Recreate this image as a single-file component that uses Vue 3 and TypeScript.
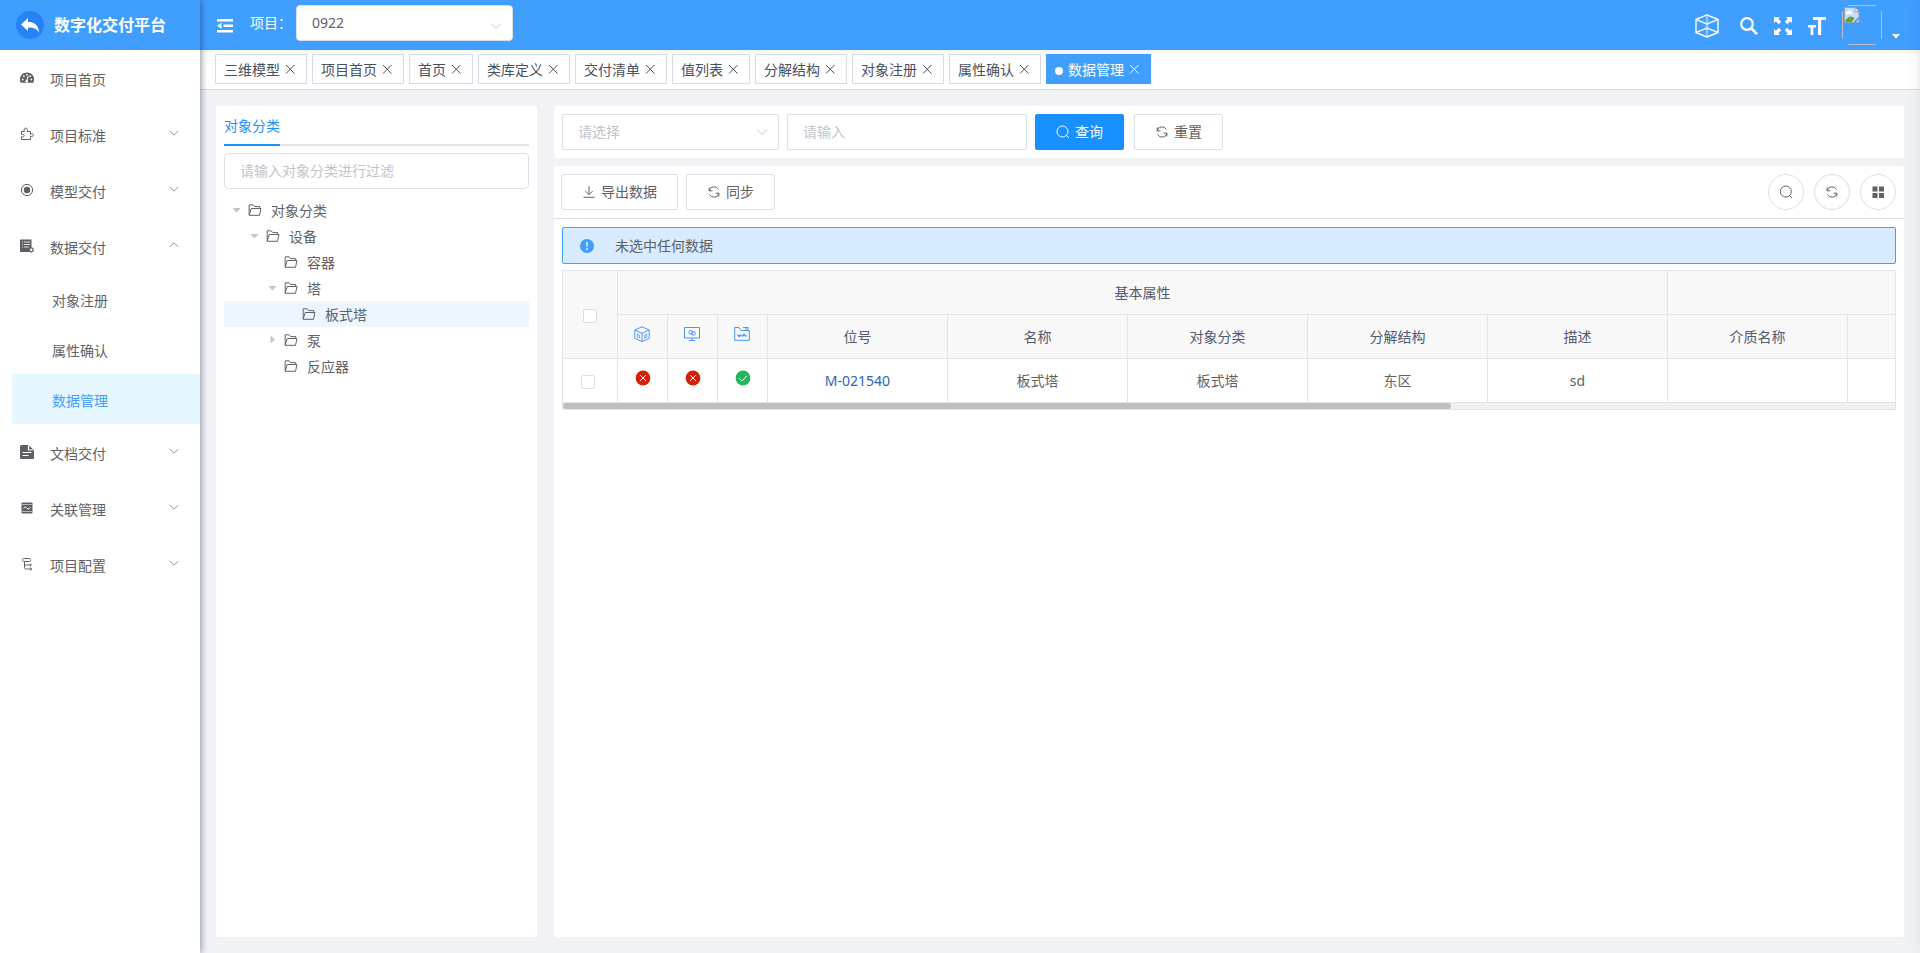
<script setup lang="ts">
import { ref } from 'vue'

interface SubItem { label: string; active?: boolean }
interface MenuItem { label: string; icon: string; arrow?: 'up' | 'down'; children?: SubItem[] }
interface TreeNode { label: string; level: number; caret?: 'open' | 'closed'; active?: boolean }

const menu: MenuItem[] = [
  { label: '项目首页', icon: 'gauge' },
  { label: '项目标准', icon: 'puzzle', arrow: 'down' },
  { label: '模型交付', icon: 'target', arrow: 'down' },
  {
    label: '数据交付', icon: 'server', arrow: 'up',
    children: [{ label: '对象注册' }, { label: '属性确认' }, { label: '数据管理', active: true }]
  },
  { label: '文档交付', icon: 'doc', arrow: 'down' },
  { label: '关联管理', icon: 'pulse', arrow: 'down' },
  { label: '项目配置', icon: 'branch', arrow: 'down' }
]

const tabs = ['三维模型', '项目首页', '首页', '类库定义', '交付清单', '值列表', '分解结构', '对象注册', '属性确认', '数据管理']
const activeTab = ref('数据管理')

const tree: TreeNode[] = [
  { label: '对象分类', level: 0, caret: 'open' },
  { label: '设备', level: 1, caret: 'open' },
  { label: '容器', level: 2 },
  { label: '塔', level: 2, caret: 'open' },
  { label: '板式塔', level: 3, active: true },
  { label: '泵', level: 2, caret: 'closed' },
  { label: '反应器', level: 2 }
]

const columns = ['位号', '名称', '对象分类', '分解结构', '描述', '介质名称', '']
const statuses = [false, false, true]
const row = ['板式塔', '板式塔', '东区', 'sd', '', '']
const keyword = ref('')
const treeFilter = ref('')
</script>

<template>
  <div class="app">
    <aside class="sidebar">
      <div class="brand">
        <svg class="brand-logo" viewBox="0 0 28 28" aria-hidden="true">
          <circle cx="14" cy="14" r="14" fill="#2682f5" />
          <path d="M5 13.500 12 7v4c6 0 10.500 2.500 11 10.500-2.500-4-5.500-5-11-5V20z" fill="#fff" />
        </svg>
        <h1 class="brand-name">数字化交付平台</h1>
      </div>
      <nav class="menu">
        <template v-for="item in menu" :key="item.label">
          <a class="menu-item" href="#">
            <svg class="menu-icon" viewBox="0 0 14 14" aria-hidden="true">
              <g v-if="item.icon === 'gauge'">
                <path d="M7 1.500a7 7 0 0 0-6.300 10.200h12.600A7 7 0 0 0 7 1.500z" fill="#5c5f66" />
                <path d="M6.500 10.500 8.300 5" stroke="#fff" stroke-width="1.100" />
                <g fill="#fff"><circle cx="2.700" cy="8.500" r=".9" /><circle cx="3.900" cy="5.200" r=".9" /><circle cx="7" cy="3.600" r=".9" /><circle cx="10.300" cy="5.200" r=".9" /><circle cx="11.400" cy="8.500" r=".9" /><circle cx="6.700" cy="10.300" r="1.300" /></g>
              </g>
              <path v-else-if="item.icon === 'puzzle'" d="M1.500 4.500h2.800C3.700 2.500 4.500 1 5.700 1S7.700 2.500 7.100 4.500h3.400v2.600c1.600-.8 2.900-.2 2.900 1s-1.300 1.700-2.900 1v3.400h-9V9.800c2 .5 2.600-.2 2.600-1.200s-.9-1.500-2.600-1z" fill="none" stroke="#606266" />
              <g v-else-if="item.icon === 'target'">
                <circle cx="7" cy="7" r="5.600" fill="none" stroke="#606266" />
                <circle cx="7" cy="7" r="3.200" fill="#5c5f66" />
              </g>
              <g v-else-if="item.icon === 'server'">
                <path d="M1 .5h10.500v8L9 13H1a1 1 0 0 1-1-1V1.500a1 1 0 0 1 1-1z" fill="#5c5f66" />
                <path d="M2 3h1M4 3h6M2 5.500h1M4 5.500h6M2 8h1M4 8h5" stroke="#fff" stroke-width=".8" />
                <circle cx="11.200" cy="10.800" r="2" fill="#fff" stroke="#5c5f66" stroke-width="1.200" />
              </g>
              <g v-else-if="item.icon === 'doc'">
                <path d="M1.500 0H8l6 5v7.500a1.500 1.500 0 0 1-1.500 1.500h-11A1.500 1.500 0 0 1 0 12.500v-11A1.500 1.500 0 0 1 1.500 0z" fill="#5c5f66" />
                <path d="M8.500.8V5h4.700M2.500 7.500h9M2.500 10.500h6" fill="none" stroke="#fff" stroke-width="1.200" />
              </g>
              <g v-else-if="item.icon === 'pulse'">
                <rect x="1.500" y="1.500" width="11" height="11" rx="1" fill="#5c5f66" />
                <path d="M1.500 3.500h11M1.500 10.500h11" stroke="#c9cbce" stroke-width=".8" />
                <path d="M3.500 7.500 5.500 5.800 8 8.300 10.500 6.500" fill="none" stroke="#fff" />
              </g>
              <g v-else fill="none" stroke="#606266">
                <rect x="2.500" y="1.500" width="8" height="3" rx="1" />
                <path d="M4.500 4.500v6a1.500 1.500 0 0 0 1.500 1.500h5.500M4.500 8H11M10 6.500 11.500 8 10 9.300M10 10.500 11.800 12 10 13.300" />
              </g>
            </svg>
            <span class="menu-label">{{ item.label }}</span>
            <svg v-if="item.arrow" class="menu-arrow" :class="item.arrow" viewBox="0 0 12 12" aria-hidden="true">
              <path d="M1.800 4 6 8.200 10.200 4" />
            </svg>
          </a>
          <a v-for="sub in item.children" :key="sub.label" class="sub-item" :class="{ active: sub.active }" href="#">
            <span class="menu-label">{{ sub.label }}</span>
          </a>
        </template>
      </nav>
    </aside>

    <div class="main">
      <header class="topbar">
        <button class="icon-btn fold" aria-label="折叠菜单">
          <svg viewBox="0 0 16 14" width="16" height="14" fill="#fff"><path d="M0 0h16v2.500H0zM6.500 5.500H16V8H6.500zM0 11h16v2.500H0zM0 6.800 4.500 3.800v6z" /></svg>
        </button>
        <label class="project-label" for="project">项目：</label>
        <span class="select-wrap project">
          <select id="project" class="field"><option>0922</option></select>
          <svg class="select-arrow" viewBox="0 0 14 14" aria-hidden="true"><path d="M2 4.500 7 9.500 12 4.500" /></svg>
        </span>
        <div class="tools">
          <button class="icon-btn" aria-label="三维模型">
            <svg viewBox="0 0 24 24" width="24" height="24" fill="none" stroke="#fff" stroke-linejoin="round">
              <path d="M12 .8 23 5.500v13L12 23 1 18.500v-13z" stroke-width="1.400" />
              <path d="M1 5.500 12 10l11-4.500M1 18.500 12 14l11 4.500" stroke-opacity=".85" stroke-width="1.400" />
              <path d="M12 1v22" stroke-opacity=".4" stroke-width="2.500" />
            </svg>
          </button>
          <button class="icon-btn" aria-label="搜索">
            <svg viewBox="0 0 18 18" width="18" height="18" fill="none" stroke="#fff"><circle cx="7" cy="7" r="5.800" stroke-width="2.200" /><path d="M11.300 11.300 17 17" stroke-width="2.600" /></svg>
          </button>
          <button class="icon-btn" aria-label="全屏">
            <svg viewBox="0 0 18 18" width="18" height="18" fill="#fff">
              <path d="M0 0h6L4.200 1.800 7.200 4.800 4.800 7.200 1.800 4.200 0 6z" />
              <path d="M18 0h-6l1.800 1.800-3 3 2.400 2.400 3-3L18 6z" />
              <path d="M0 18h6l-1.800-1.800 3-3-2.400-2.400-3 3L0 12z" />
              <path d="M18 18h-6l1.800-1.800-3-3 2.400-2.400 3 3L18 12z" />
            </svg>
          </button>
          <button class="icon-btn" aria-label="字体大小">
            <svg viewBox="0 0 18 18" width="18" height="18" fill="#fff"><path d="M5 0h13v3h-4.800v15h-3.200V3H5zM0 8h8v2.500H5.300V18H2.600v-7.500H0z" /></svg>
          </button>
          <button class="user" aria-label="用户菜单">
            <svg class="avatar" viewBox="0 0 40 40">
              <path d="M6 .5h28M6 39.500h28M.5 6v28M39.500 6v28" fill="none" stroke="#b8bfca" />
              <path d="M2.500 2.500h10.500l4 4V17.500H2.500z" fill="#c9dcf8" stroke="#98a0ab" />
              <path d="M13 2.500v4h4z" fill="#fff" stroke="#98a0ab" />
              <path d="M4 9a2 2 0 0 1 1.500-2.600A2.600 2.600 0 0 1 10 7.200 1.500 1.500 0 0 1 10 9z" fill="#fff" />
              <path d="M3 17c1-3.500 3.500-5.500 6-5.500 2 0 3 1 3.500 2L9.500 17z" fill="#57a936" />
              <path d="m11 17.500 6-6v2.500L13.500 17.500z" fill="#409eff" />
            </svg>
            <svg class="caret" viewBox="0 0 8 5"><path d="M0 0h8L4 4.500z" fill="#fff" /></svg>
          </button>
        </div>
      </header>

      <div class="tabs">
        <a v-for="t in tabs" :key="t" class="tab" :class="{ active: t === activeTab }" href="#" @click.prevent="activeTab = t">
          <span class="tab-text">{{ t }}</span>
          <svg class="close" viewBox="0 0 16 16" aria-hidden="true"><path d="m4 4 8.500 8.500M12.500 4 4 12.500" /></svg>
        </a>
      </div>

      <main class="content">
        <section class="card tree-card">
          <div class="panel-tabs"><button class="panel-tab">对象分类</button></div>
          <input v-model="treeFilter" class="field" type="text" placeholder="请输入对象分类进行过滤" aria-label="对象分类过滤">
          <ul class="tree">
            <li v-for="n in tree" :key="n.label" class="node" :class="['level-' + n.level, { active: n.active }]">
              <svg class="node-caret" viewBox="0 0 24 12" aria-hidden="true">
                <path v-if="n.caret === 'open'" d="M8.500 4h8l-4 4.500z" />
                <path v-else-if="n.caret === 'closed'" d="M10.500 1.500v8l4.500-4z" />
              </svg>
              <svg class="folder" viewBox="0 0 14 14" aria-hidden="true"><path d="M1.200 12V1.800h4l1.500 1.800h5V5.500M1.200 12 3.200 5.500h9.800L11.500 12.300H1.200z" /></svg>
              <span class="node-text">{{ n.label }}</span>
            </li>
          </ul>
        </section>

        <div class="right">
          <section class="card query">
            <span class="select-wrap">
              <select class="field square empty" aria-label="查询字段"><option>请选择</option></select>
              <svg class="select-arrow middle" viewBox="0 0 14 14" aria-hidden="true"><path d="M2 4.500 7 9.500 12 4.500" /></svg>
            </span>
            <input v-model="keyword" class="field square keyword" type="text" placeholder="请输入" aria-label="查询内容">
            <button class="btn primary">
              <svg viewBox="0 0 14 14"><circle cx="6.500" cy="6.500" r="5.500" /><path d="m10.200 10.200 2.800 2.800" /></svg>查询
            </button>
            <button class="btn reset">
              <svg viewBox="0 0 14 14"><path d="M2 6a5.100 5.100 0 0 1 9.500-1.500M12 8a5.100 5.100 0 0 1-9.500 1.500M2.200 2.500v3.300h3.200M11.800 11.500V8.200H8.600" /></svg>重置
            </button>
          </section>

          <section class="card data">
            <div class="toolbar">
              <button class="btn">
                <svg viewBox="0 0 14 14"><path d="M7 1v8.500M3.300 6 7 9.700 10.700 6M1.500 12.300h11" /></svg>导出数据
              </button>
              <button class="btn">
                <svg viewBox="0 0 14 14"><path d="M2 6a5.100 5.100 0 0 1 9.500-1.500M12 8a5.100 5.100 0 0 1-9.500 1.500M2.200 2.500v3.300h3.200M11.800 11.500V8.200H8.600" /></svg>同步
              </button>
              <div class="round-group">
                <button class="round" aria-label="查询"><svg viewBox="0 0 14 14"><circle cx="6.800" cy="6.500" r="5.500" /><path d="m10.400 10.400 2.600 2.600" /></svg></button>
                <button class="round" aria-label="刷新"><svg viewBox="0 0 14 14"><path d="M2 6a5.100 5.100 0 0 1 9.500-1.500M12 8a5.100 5.100 0 0 1-9.500 1.500M2.200 2.500v3.300h3.200M11.800 11.500V8.200H8.600" /></svg></button>
                <button class="round" aria-label="列设置"><svg class="solid" viewBox="0 0 14 14"><path d="M1.500 1.500h5v5h-5zM8 1.500h5v5H8zM1.500 8h5v5h-5zM8 8h5v5H8z" /></svg></button>
              </div>
            </div>

            <div class="alert">
              <svg viewBox="0 0 14 14" aria-hidden="true"><circle cx="7" cy="7" r="7" fill="#409eff" /><path d="M6.200 3h1.600l-.3 5h-1zM6.200 9.300h1.600v1.600H6.200z" fill="#fff" /></svg>
              <span>未选中任何数据</span>
            </div>

            <div class="table-box">
              <table>
                <colgroup>
                  <col class="c-check"><col class="c-icon"><col class="c-icon"><col class="c-icon">
                  <col v-for="i in 6" :key="i" class="c-text"><col>
                </colgroup>
                <thead>
                  <tr>
                    <th rowspan="2"><input type="checkbox" class="check head-check" aria-label="全选"></th>
                    <th colspan="8">基本属性</th>
                    <th colspan="2"></th>
                  </tr>
                  <tr>
                    <th>
                      <svg class="head-icon" viewBox="0 0 16 16">
                        <path d="M8 .8 15.200 4v8.300L8 15.500.8 12.300V4zM.8 4 8 7.300 15.200 4M8 7.300v8.200" />
                        <path d="M3.300 8v3l2 1V9zM12.700 8v3l-2 1V9z" stroke-opacity=".8" />
                      </svg>
                    </th>
                    <th>
                      <svg class="head-icon" viewBox="0 0 16 16">
                        <path d="M.5 1.500h15v10.500H.5zM8 12v2.500M5 14.500h6" />
                        <circle cx="6.800" cy="6.300" r="1.900" /><circle cx="9.500" cy="7.300" r="1.900" />
                      </svg>
                    </th>
                    <th>
                      <svg class="head-icon" viewBox="0 0 16 16">
                        <path d="M.7 14.300V1.500H5l2 3h8.300v9.800zM9 1.500h5.500M11 3h4" />
                        <path d="M3.500 8.500 5.500 10.500 7.500 8.500M8 10.500 10 8.500 12.500 10.500" stroke-width="1.400" />
                      </svg>
                    </th>
                    <th v-for="(c, i) in columns" :key="i">{{ c }}</th>
                  </tr>
                </thead>
                <tbody>
                  <tr>
                    <td><input type="checkbox" class="check" aria-label="选择 M-021540"></td>
                    <td v-for="(ok, i) in statuses" :key="i">
                      <svg class="status" viewBox="0 0 16 16">
                        <circle cx="8" cy="8" r="7.400" :class="ok ? 'ok' : 'bad'" />
                        <path v-if="ok" d="m4.200 8.300 2.800 2.700 5-5.200" />
                        <path v-else d="m5.200 5.200 5.600 5.600M10.800 5.200l-5.600 5.600" />
                      </svg>
                    </td>
                    <td><a class="link" href="#">M-021540</a></td>
                    <td v-for="(v, i) in row" :key="i">{{ v }}</td>
                  </tr>
                </tbody>
              </table>
              <div class="scroll-track"><div class="scroll-thumb"></div></div>
            </div>
          </section>
        </div>
      </main>
      <div class="drawer-edge"></div>
    </div>
  </div>
</template>

<style>
body {
  margin: 0;
}
</style>

<style scoped>
* {
  box-sizing: border-box;
}

.app {
  display: flex;
  min-height: 100vh;
  background: #f0f2f5;
  color: #606266;
  font-family: "Noto Sans", "Noto Sans CJK SC", sans-serif;
  font-size: 14px;
  line-height: 20px;
}

button,
input,
select {
  font: inherit;
  color: inherit;
  margin: 0;
}

button {
  cursor: pointer;
}

a {
  color: inherit;
  text-decoration: none;
}

svg {
  display: block;
  flex: none;
}

.sidebar {
  position: relative;
  z-index: 2;
  flex: none;
  width: 200px;
  background: #fff;
  box-shadow: 2px 0 6px rgba(0, 21, 41, 0.35);
}

.brand {
  display: flex;
  align-items: center;
  gap: 10px;
  height: 50px;
  padding-left: 16px;
  background: #409eff;
}

.brand-logo {
  width: 28px;
  height: 28px;
}

.brand-name {
  margin: 0;
  color: #fff;
  font-size: 16px;
  font-weight: 700;
}

.menu-item {
  display: flex;
  align-items: center;
  height: 56px;
  padding: 0 20px;
}

.menu-icon {
  width: 14px;
  height: 14px;
  margin-right: 16px;
}

.menu-label {
  padding-top: 4px;
}

.menu-arrow {
  width: 12px;
  height: 12px;
  margin: 0 0 2px auto;
  fill: none;
  stroke: #909399;
}

.menu-arrow.up {
  transform: rotate(180deg);
}

.sub-item {
  display: flex;
  align-items: center;
  height: 50px;
  margin-left: 12px;
  padding-left: 40px;
}

.sub-item.active {
  background: #e6f7ff;
  color: #409eff;
}

.main {
  position: relative;
  flex: 1;
  min-width: 0;
  display: flex;
  flex-direction: column;
  overflow: hidden;
}

.topbar {
  display: flex;
  align-items: center;
  height: 50px;
  padding: 0 20px 0 17px;
  background: #409eff;
}

.icon-btn {
  padding: 2px 0 0;
  border: 0;
  background: none;
}

.project-label {
  margin-left: 17px;
  padding-bottom: 4px;
  color: #fff;
}

.select-wrap {
  position: relative;
  width: 217px;
}

.select-wrap.project {
  margin-left: 4px;
  padding-bottom: 4px;
}

.field {
  display: block;
  width: 100%;
  height: 36px;
  padding: 0 15px;
  border: 1px solid #dcdfe6;
  border-radius: 4px;
  background: #fff;
  color: #606266;
  outline: 0;
  appearance: none;
}

.field.square {
  border-radius: 2px;
}

.field.empty,
.field::placeholder {
  color: #c0c4cc;
}

input.field {
  padding-bottom: 2px;
}

.select-arrow {
  position: absolute;
  right: 10px;
  bottom: 12px;
  width: 14px;
  height: 14px;
  fill: none;
  stroke: #c0c4cc;
  pointer-events: none;
}

.tools {
  display: flex;
  align-items: center;
  gap: 16px;
  margin-left: auto;
}

.tools .icon-btn:first-child {
  margin-right: 5px;
}

.user {
  display: flex;
  align-items: flex-end;
  gap: 10px;
  padding: 0;
  border: 0;
  background: none;
}

.avatar {
  width: 40px;
  height: 40px;
}

.caret {
  width: 8px;
  height: 5px;
  margin-bottom: 6px;
}

.tabs {
  display: flex;
  gap: 5px;
  height: 40px;
  padding: 4px 15px 0;
  border-bottom: 1px solid #d8dce5;
  background: #fff;
  box-shadow: inset 0 2px 4px rgba(0, 21, 41, 0.06);
}

.tab {
  display: flex;
  align-items: center;
  height: 30px;
  padding: 0 8px;
  border: 1px solid #d8dce5;
  background: #fff;
  color: #495060;
}

.tab-text {
  padding-top: 2px;
}

.tab.active {
  border-color: #409eff;
  background: #409eff;
  color: #fff;
}

.tab.active::before {
  content: "";
  width: 8px;
  height: 8px;
  margin: 3px 5px 0 0;
  border-radius: 50%;
  background: #fff;
}

.close {
  width: 16px;
  height: 16px;
  margin-left: 2px;
  stroke: currentColor;
  fill: none;
}

.content {
  flex: 1;
  display: flex;
  gap: 17px;
  padding: 16px;
}

.card {
  border-radius: 2px;
  background: #fff;
}

.tree-card {
  flex: none;
  width: 321px;
  padding: 0 8px;
}

.panel-tabs {
  height: 40px;
  margin-bottom: 7px;
  border-bottom: 2px solid #dfe4ed;
}

.panel-tab {
  height: 40px;
  padding: 2px 0 0;
  border: 0;
  border-bottom: 2px solid #1890ff;
  background: none;
  color: #1890ff;
}

.tree {
  margin: 8px 0 0;
  padding: 0;
  list-style: none;
}

.node {
  display: flex;
  align-items: center;
  height: 26px;
}

.node.active {
  background: #edf5ff;
}

.level-1 {
  padding-left: 18px;
}

.level-2 {
  padding-left: 36px;
}

.level-3 {
  padding-left: 54px;
}

.node-caret {
  width: 24px;
  height: 12px;
  fill: #c0c4cc;
}

.folder {
  width: 14px;
  height: 14px;
  margin-right: 9px;
  fill: none;
  stroke: #606266;
}

.node-text {
  padding-top: 2px;
}

.right {
  flex: 1;
  min-width: 0;
  display: flex;
  flex-direction: column;
  gap: 8px;
}

.query {
  display: flex;
  align-items: center;
  gap: 8px;
  height: 52px;
  padding: 0 8px;
}

.keyword {
  width: 240px;
}

.select-arrow.middle {
  bottom: 11px;
}

.btn {
  display: inline-flex;
  align-items: center;
  gap: 5px;
  height: 36px;
  padding: 0 20px;
  border: 1px solid #dcdfe6;
  border-radius: 2px;
  background: #fff;
}

.btn svg,
.round svg {
  width: 14px;
  height: 14px;
  fill: none;
  stroke: currentColor;
}

.round svg.solid {
  fill: currentColor;
  stroke: none;
}

.btn.primary {
  border-color: #1890ff;
  background: #1890ff;
  color: #fff;
}

.btn.reset {
  margin-left: 2px;
}

.data {
  flex: 1;
}

.toolbar {
  display: flex;
  align-items: center;
  gap: 8px;
  height: 53px;
  padding: 0 8px 0 7px;
  border-bottom: 1px solid #dcdfe6;
}

.round-group {
  display: flex;
  gap: 10px;
  margin-left: auto;
}

.round {
  display: grid;
  place-items: center;
  width: 36px;
  height: 36px;
  padding: 0;
  border: 1px solid #dcdfe6;
  border-radius: 50%;
  background: #fff;
}

.alert {
  display: flex;
  align-items: center;
  gap: 21px;
  height: 37px;
  margin: 8px 8px 6px;
  padding: 0 17px;
  border: 1px solid #409eff;
  border-radius: 2px;
  background: #d9ebff;
}

.alert svg {
  width: 14px;
  height: 14px;
}

.table-box {
  margin: 0 8px;
  border: 1px solid #dfe6ec;
  overflow: hidden;
}

table {
  width: 100%;
  table-layout: fixed;
  border-collapse: separate;
  border-spacing: 0;
}

.c-check {
  width: 55px;
}

.c-icon {
  width: 50px;
}

.c-text {
  width: 180px;
}

th,
td {
  height: 44px;
  padding: 0;
  border-right: 1px solid #dfe6ec;
  border-bottom: 1px solid #dfe6ec;
  text-align: center;
  vertical-align: middle;
  font-weight: 400;
}

tr > :last-child {
  border-right: 0;
}

th {
  background: #f8f8f9;
  color: #515a6e;
}

.check {
  display: block;
  width: 14px;
  height: 14px;
  margin: 2px auto 0 18px;
  border: 1px solid #dcdfe6;
  border-radius: 2px;
  background: #fff;
  appearance: none;
}

.head-check {
  margin-left: 20px;
}

.head-icon,
.status {
  width: 16px;
  height: 16px;
  margin: 0 auto 6px;
  fill: none;
}

.head-icon {
  margin-left: 16px;
  stroke: #4a94f8;
}

.status {
  stroke: #fff;
}

.status circle {
  stroke: none;
}

.ok {
  fill: #1fb757;
}

.bad {
  fill: #d81e06;
}

.link {
  color: #2b65b1;
}

.scroll-track {
  height: 6px;
  background: #f1f1f1;
}

.scroll-thumb {
  width: calc(200% / 3);
  height: 6px;
  border-radius: 3px;
  background: #bfbfbf;
}

.drawer-edge {
  position: absolute;
  top: 0;
  bottom: 0;
  left: 100%;
  width: 20px;
  box-shadow: 0 0 15px rgba(0, 0, 0, 0.08);
  pointer-events: none;
}
</style>
